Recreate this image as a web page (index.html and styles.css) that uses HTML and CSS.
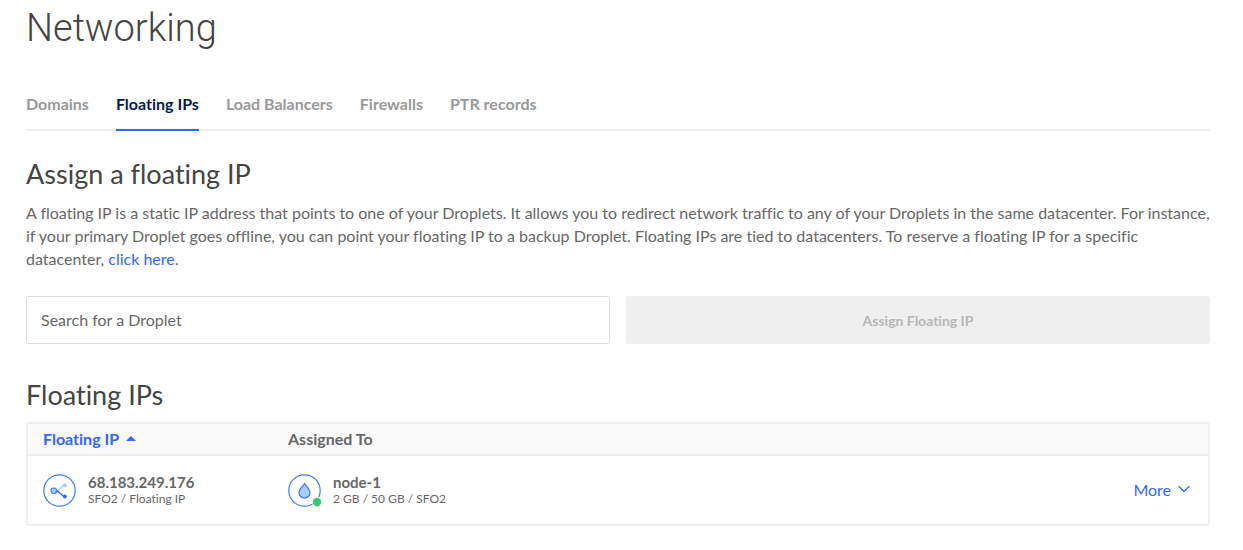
FILE: index.html
```html
<!DOCTYPE html>
<html lang="en">
<head>
<meta charset="utf-8">
<title>Networking</title>
<link rel="stylesheet" href="styles.css">
</head>
<body>
<main class="page">
  <h1 class="page-title">Networking</h1>
  <nav class="tabs" aria-label="Networking sections">
    <a class="tab" href="#domains">Domains</a>
    <a class="tab tab-active" href="#floating-ips" aria-current="page">Floating IPs</a>
    <a class="tab" href="#load-balancers">Load Balancers</a>
    <a class="tab" href="#firewalls">Firewalls</a>
    <a class="tab" href="#ptr-records">PTR records</a>
  </nav>

  <section class="assign">
    <h2 class="section-title">Assign a floating IP</h2>
    <p class="intro">A floating IP is a static IP address that points to one of your Droplets. It allows you to redirect network traffic to any of your Droplets in the same datacenter. For instance, if your primary Droplet goes offline, you can point your floating IP to a backup Droplet. Floating IPs are tied to datacenters. To reserve a floating IP for a specific datacenter, <a class="link" href="#reserve">click here</a>.</p>
    <form class="assign-form">
      <input class="search" type="text" placeholder="Search for a Droplet" aria-label="Search for a Droplet">
      <button class="assign-button" type="submit" disabled>Assign Floating IP</button>
    </form>
  </section>

  <section class="list">
    <h2 class="section-title">Floating IPs</h2>
    <div class="table-frame">
      <table class="table">
        <thead>
          <tr>
            <th class="col-ip" scope="col" aria-sort="ascending"><button class="sort" type="button">Floating IP<svg class="caret" viewBox="0 0 10 5" aria-hidden="true"><path d="M0 5 4.4.5a.9.9 0 0 1 1.2 0L10 5Z" fill="currentColor"/></svg></button></th>
            <th scope="col">Assigned To</th>
            <td class="col-more"></td>
          </tr>
        </thead>
        <tbody>
          <tr>
            <td>
              <div class="resource">
                <svg class="badge" viewBox="0 0 33 33" fill="none" aria-hidden="true">
                  <circle cx="16.500" cy="16.500" r="15.700" stroke="#3b7bf8" stroke-width="1.200"/>
                  <path d="M13 17c5 0 4.500-5.500 9-5.500" stroke="#a9ccff" stroke-width="1.300"/>
                  <path d="M13 17c5 0 4.500 5.500 9 5.500" stroke="#2f6bf2" stroke-width="1.300"/>
                  <circle cx="10.800" cy="16.800" r="2.800" fill="#a9ccff" stroke="#3b7bf8" stroke-width="1.200"/>
                  <circle cx="21.800" cy="11.300" r="2" fill="#a9ccff"/>
                  <circle cx="21.800" cy="22.500" r="2" fill="#2f6bf2"/>
                </svg>
                <div class="resource-text"><span class="name">68.183.249.176</span><span class="detail">SFO2 / Floating IP</span></div>
              </div>
            </td>
            <td>
              <div class="resource">
                <svg class="badge" viewBox="0 0 33 33" fill="none" aria-hidden="true">
                  <circle cx="16.500" cy="16.500" r="15.700" stroke="#3b7bf8" stroke-width="1.200"/>
                  <path d="M16.500 9.500c-2 3-5.500 5.900-5.500 9.100a5.500 5.500 0 0 0 11 0c0-3.200-3.500-6.100-5.500-9.100Z" fill="#a9ccff" stroke="#3b7bf8" stroke-width="1.200" stroke-linejoin="round"/>
                  <circle cx="29" cy="28" r="5" fill="#fff"/>
                  <circle cx="29" cy="28" r="4.200" fill="#35cb6c"/>
                </svg>
                <div class="resource-text"><span class="name">node-1</span><span class="detail">2 GB / 50 GB / SFO2</span></div>
              </div>
            </td>
            <td class="col-more"><button class="more" type="button">More<svg class="chevron" viewBox="0 0 12 8" fill="none" aria-hidden="true"><path d="m.7 1.200 5.300 5.300 5.300-5.300" stroke="currentColor" stroke-width="1.400"/></svg></button></td>
          </tr>
        </tbody>
      </table>
    </div>
  </section>
</main>
</body>
</html>
```
FILE: styles.css
```css
*, *::before, *::after { box-sizing: border-box; }
body {
  margin: 0;
  background: #fff;
  color: #676767;
  font: 16px/23px Lato, "Liberation Sans", sans-serif;
  font-variant-ligatures: none;
}
button, input { font: inherit; }
button { border: 0; background: none; padding: 0; }
.page { padding: 4px 33px 24px 26px; }
.page-title {
  margin: 0;
  color: #444;
  font: 300 38px/48px Roboto, sans-serif;
}
.tabs {
  display: flex;
  gap: 27px;
  margin-top: 40px;
  border-bottom: 2px solid #efefef;
}
.tab {
  margin-bottom: -2px;
  padding-bottom: 14px;
  border-bottom: 2px solid transparent;
  color: #999;
  font-weight: 700;
  text-decoration: none;
}
.tab-active { border-color: #3069ff; color: #031b4e; }
.section-title {
  margin: 0;
  color: #444;
  font-size: 27px;
  font-weight: 400;
  line-height: 32px;
}
.assign { margin-top: 27px; }
.intro { margin: 11px 0 26px; }
.link { color: #3069ff; text-decoration: none; }
.assign-form {
  display: grid;
  grid-template-columns: 1fr 1fr;
  gap: 16px;
}
.search {
  min-width: 0;
  height: 48px;
  padding: 0 14px 2px;
  border: 1px solid #dcdcdc;
  border-radius: 3px;
  background: #fff;
  color: #676767;
}
.search::placeholder { color: #676767; opacity: 1; }
.assign-button {
  border-radius: 3px;
  background: #efefef;
  color: #b7b7b7;
  font-size: 14px;
  font-weight: 700;
}
.list { margin-top: 35px; }
.table-frame {
  margin-top: 11px;
  border: 2px solid #efefef;
  border-radius: 4px;
  overflow: hidden;
}
.table {
  width: 100%;
  border-spacing: 0;
  table-layout: fixed;
}
.table th, .table td { padding: 0 0 0 15px; text-align: left; }
.table thead th, .table thead td {
  height: 32px;
  padding-bottom: 2px;
  border-bottom: 2px solid #efefef;
  background: #fafafa;
}
.table tbody td { height: 68px; }
.table .col-ip { width: 245px; }
.table .col-more { width: 120px; padding: 0 18px 0 0; text-align: right; }
.sort { display: flex; align-items: center; gap: 7px; color: #3069ff; }
.caret { width: 10px; height: 5px; }
.resource { display: flex; align-items: center; gap: 12px; }
.badge { width: 33px; height: 33px; overflow: visible; }
.resource-text { display: flex; flex-direction: column; }
.name { font-size: 15px; font-weight: 700; line-height: 18px; }
.detail { font-size: 12px; line-height: 16px; }
.more { display: inline-flex; align-items: center; gap: 7px; padding-bottom: 2px; color: #3069ff; }
.chevron { width: 12px; height: 8px; }
```
